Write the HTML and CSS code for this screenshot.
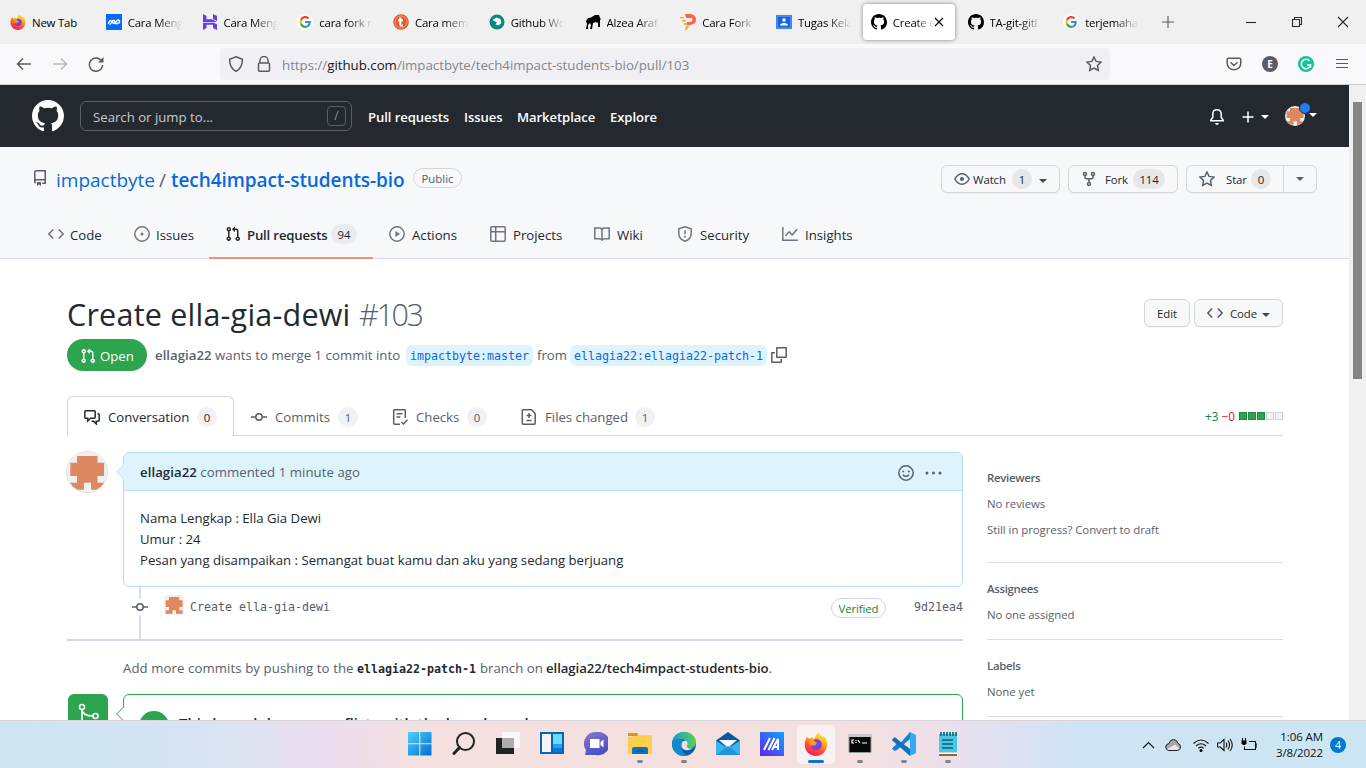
FILE: index.html
```html
<!DOCTYPE html>
<html lang="en">
<head>
<meta charset="utf-8">
<title>Create ella-gia-dewi by ellagia22 · Pull Request #103</title>
<link rel="stylesheet" href="styles.css">
</head>
<body>
<svg class="sprite" aria-hidden="true">
  <symbol id="mark" viewBox="0 0 16 16"><path fill="currentColor" d="M8 0C3.58 0 0 3.58 0 8c0 3.54 2.29 6.53 5.47 7.59.4.07.55-.17.55-.38 0-.19-.01-.82-.01-1.49-2.01.37-2.53-.49-2.69-.94-.09-.23-.48-.94-.82-1.13-.28-.15-.68-.52-.01-.53.63-.01 1.08.58 1.23.82.72 1.21 1.87.87 2.33.66.07-.52.28-.87.51-1.07-1.78-.2-3.64-.89-3.64-3.95 0-.87.31-1.59.82-2.15-.08-.2-.36-1.02.08-2.12 0 0 .67-.21 2.2.82.64-.18 1.32-.27 2-.27.68 0 1.36.09 2 .27 1.53-1.04 2.2-.82 2.2-.82.44 1.1.16 1.92.08 2.12.51.56.82 1.27.82 2.15 0 3.07-1.87 3.75-3.65 3.95.29.25.54.73.54 1.48 0 1.07-.01 1.93-.01 2.2 0 .21.15.46.55.38A8.013 8.013 0 0016 8c0-4.42-3.58-8-8-8z"/></symbol>
  <symbol id="repo" viewBox="0 0 16 16"><path fill="currentColor" fill-rule="evenodd" d="M2 2.5A2.5 2.5 0 014.5 0h8.75a.75.75 0 01.75.75v12.5a.75.75 0 01-.75.75h-2.5a.75.75 0 110-1.5h1.75v-2h-8a1 1 0 00-.714 1.7.75.75 0 01-1.072 1.05A2.495 2.495 0 012 11.5v-9zm10.5-1V9h-8c-.356 0-.694.074-1 .208V2.5a1 1 0 011-1h8zM5 12.25v3.25a.25.25 0 00.4.2l1.45-1.087a.25.25 0 01.3 0L8.6 15.7a.25.25 0 00.4-.2v-3.25a.25.25 0 00-.25-.25h-3.5a.25.25 0 00-.25.25z"/></symbol>
  <symbol id="pull" viewBox="0 0 16 16"><path fill="currentColor" fill-rule="evenodd" d="M7.177 3.073L9.573.677A.25.25 0 0110 .854v4.792a.25.25 0 01-.427.177L7.177 3.427a.25.25 0 010-.354zM3.75 2.5a.75.75 0 100 1.5.75.75 0 000-1.5zm-2.25.75a2.25 2.25 0 113 2.122v5.256a2.251 2.251 0 11-1.5 0V5.372A2.25 2.25 0 011.5 3.25zM11 2.5h-1V4h1a1 1 0 011 1v5.628a2.251 2.251 0 101.5 0V5A2.5 2.5 0 0011 2.5zm1 10.25a.75.75 0 111.5 0 .75.75 0 01-1.5 0zM3.75 12a.75.75 0 100 1.5.75.75 0 000-1.5z"/></symbol>
  <symbol id="code" viewBox="0 0 16 16"><path class="ln" d="M5.2 3.4L.9 8l4.3 4.6M10.8 3.4L15.1 8l-4.3 4.6"/></symbol>
  <symbol id="issue" viewBox="0 0 16 16"><circle class="ln" cx="8" cy="8" r="7.2"/><circle cx="8" cy="8" r="1.5" fill="currentColor"/></symbol>
  <symbol id="play" viewBox="0 0 16 16"><circle class="ln" cx="8" cy="8" r="7.2"/><path fill="currentColor" d="M6.4 5v6l4.7-3z"/></symbol>
  <symbol id="table" viewBox="0 0 16 16"><path class="ln" d="M1.7.8h12.6q.9 0 .9.9v12.6q0 .9-.9.9H1.7q-.9 0-.9-.9V1.7q0-.9.9-.9zM.8 5.7h14.4M5.7.8v14.4"/></symbol>
  <symbol id="book" viewBox="0 0 16 16"><path class="ln" d="M8 14.6q-.5-1.800-2.600-1.800H.8V1.900h4.600Q8 1.900 8 4.300v10.300q.5-1.800 2.600-1.800h4.600V1.900h-4.600Q8 1.900 8 4.300"/></symbol>
  <symbol id="shield" viewBox="0 0 16 16"><path class="ln" d="M8 .8l6.200 2v4.700c0 3.600-2.200 6.200-6.200 7.700-4-1.500-6.200-4.100-6.200-7.700V2.800zM8 4.300v4"/><circle cx="8" cy="10.800" r="1" fill="currentColor"/></symbol>
  <symbol id="graph" viewBox="0 0 16 16"><path class="ln" d="M.8 1v13.300h15M3.500 9.800l3.700-4 3 3 5-5.500"/></symbol>
  <symbol id="eye" viewBox="0 0 16 16"><path class="ln" d="M.8 8C2.500 5 5 2.800 8 2.800S13.500 5 15.200 8C13.500 11 11 13.200 8 13.200S2.500 11 .8 8z"/><circle cx="8" cy="8" r="2" fill="currentColor"/></symbol>
  <symbol id="fork" viewBox="0 0 16 16"><g class="ln"><circle cx="4" cy="3" r="1.500"/><circle cx="12" cy="3" r="1.500"/><circle cx="8" cy="13" r="1.500"/><path d="M4 4.700v1.600q0 1.500 1.500 1.500h5q1.500 0 1.500-1.500V4.700M8 7.800v3.700"/></g></symbol>
  <symbol id="star" viewBox="0 0 16 16"><path class="ln" d="M8 1l2.100 4.400 4.900.7-3.500 3.400.8 4.800L8 12l-4.300 2.300.8-4.800L1 6.100l4.900-.7z"/></symbol>
  <symbol id="talk" viewBox="0 0 16 16"><path class="ln" d="M1.700 1.800h8.600q.9 0 .9.900v5.600q0 .9-.9.900H6.500L3.700 12V9.200h-2q-.9 0-.9-.9V2.700q0-.9.900-.9zM13.500 4.800h.8q.9 0 .9.900v5.600q0 .9-.9.900h-2V15L9.500 12.200H7.500"/></symbol>
  <symbol id="commit" viewBox="0 0 16 16"><path class="ln" d="M0 8h4.700M11.300 8H16"/><circle class="ln" cx="8" cy="8" r="3.200"/></symbol>
  <symbol id="checks" viewBox="0 0 16 16"><path class="ln" d="M8 15.200H2.600q-.9 0-.9-.9V1.700q0-.9.900-.9h9.800q.9 0 .9.900V9M4.500 4.800h6M4.500 8h3.800M9.500 13l2 2 4-4.200"/></symbol>
  <symbol id="diff" viewBox="0 0 16 16"><path class="ln" d="M2.200.8h8.300l3.700 3.700v9.800q0 .9-.9.900H2.200q-.9 0-.9-.9V1.700q0-.9.900-.9zM8 4v5M5.500 6.500h5M5.500 11.500h5"/></symbol>
  <symbol id="copy" viewBox="0 0 16 16"><path class="ln" stroke-linejoin="round" d="M5.800.8h9.400v9.400H5.800zM4 5.800H.8v9.400h9.400V12"/></symbol>
  <symbol id="smile" viewBox="0 0 16 16"><circle class="ln" cx="8" cy="8" r="7.200"/><circle cx="5.200" cy="6.500" r="1" fill="currentColor"/><circle cx="10.800" cy="6.500" r="1" fill="currentColor"/><path class="ln" d="M5 9.700q1.200 1.600 3 1.600t3-1.600"/></symbol>
  <symbol id="dots" viewBox="0 0 18 16"><g fill="currentColor"><circle cx="2" cy="8" r="1.500"/><circle cx="8.500" cy="8" r="1.500"/><circle cx="15" cy="8" r="1.500"/></g></symbol>
  <symbol id="bell" viewBox="0 0 16 16"><path class="ln" d="M8 .8c-2.700 0-4.200 1.900-4.200 4.200v3.200L1.800 11.300v.5h12.400v-.5l-2-3.100V5C12.200 2.700 10.700.8 8 .8z"/><path fill="currentColor" d="M6 14h4q-.5 2-2 2t-2-2z"/></symbol>
  <symbol id="plus" viewBox="0 0 16 16"><path class="ln" d="M8 2.500v11M2.500 8h11"/></symbol>
  <symbol id="caret" viewBox="0 0 8 4"><path fill="currentColor" d="M0 0h8L4 4z"/></symbol>
  <symbol id="identicon" viewBox="0 0 40 40"><path fill="#f0f0f0" d="M0 0h40v40H0z"/><path fill="#dd8860" d="M10 4h20.500v6.700h6.600v13.300h-6.600v6.700h6.600v7H24v-7h-7v7H3.300v-7H10V24H3.300V10.700H10z"/></symbol>
  <symbol id="merge" viewBox="0 0 24 24"><g fill="none" stroke="#fff" stroke-width="1.600"><circle cx="5" cy="4" r="2.500"/><circle cx="5" cy="20" r="2.500"/><circle cx="18.500" cy="13" r="2.500"/><path d="M5 6.500v11M5 7q1 6 11 6"/></g></symbol>
  <symbol id="google" viewBox="0 0 16 16"><circle cx="8" cy="8" r="8" fill="#fff"/><g fill="none" stroke-width="2.200"><path stroke="#ea4335" d="M4 6a4.600 4.600 0 017.500-1.600"/><path stroke="#fbbc05" d="M4.100 10.300a4.700 4.700 0 010-4.600"/><path stroke="#34a853" d="M4 10a4.600 4.600 0 007.300 1.700"/><path stroke="#4285f4" d="M8 8h4.700q0 2.500-1.600 3.800"/></g></symbol>
  <linearGradient id="ffg" x1=".75" y1="0" x2=".3" y2="1"><stop offset="0" stop-color="#fff044"/><stop offset=".35" stop-color="#ffb11b"/><stop offset=".65" stop-color="#ff5433"/><stop offset="1" stop-color="#f5155f"/></linearGradient>
  <symbol id="firefox" viewBox="0 0 24 24"><path fill="url(#ffg)" d="M14.500 0c.8 2.800 3 4 4.500 5l.8-1.200C22 6.500 23.500 9 23 13.500 22.300 20 17.500 24 12 24 5.500 24 .7 19 .7 12.500.7 9 1.800 6.800 3.500 4.500L5 7l3-1.800L9.500 7c2-1.500 2.500-4.500 5-7z"/><path fill="#7542e5" d="M12.500 7.300c3.200 0 5.300 2.400 5.300 5.200A5.500 5.500 0 0112 18c-3 0-5.200-2.300-5.200-5l3 1.300 2.900-1.600-2.200-1-3.200.3c.5-2.700 2.400-4.700 5.200-4.700z"/><path fill="#ffa11b" d="M5.500 7.500q4-1 5.500 2.300l2 1.300q-.6 1.800-3.500 1.500-1.600.2-2.500 1.600-2.500-3-1.500-6.700z"/></symbol>
</svg>

<header class="browser">
  <div class="tabs">
    <div class="tab"><svg class="i16"><use href="#firefox"/></svg><span class="tab-name">New Tab</span></div>
    <div class="tab"><svg class="i16" viewBox="0 0 16 16"><path fill="#0869ff" d="M0 0h16v16H0z"/><path fill="none" stroke="#fff" stroke-width="1.500" d="M2.500 10c0-2.500 1.500-4 3-3s1.500 3 3 2.500S10.500 6 12 6s2 1.500 1 3M3.500 10.500c2 0 2-4 4-4s1.500 3.200 3.200 3.200 1.300-1 2.300-1"/></svg><span class="tab-name fade">Cara Meng</span></div>
    <div class="tab"><svg class="i16" viewBox="0 0 16 16"><path fill="#673de6" d="M1 0l3.500 2v3.300H10L15 8H1zM11 0l4 2v5l-4-2zM1 8.800h11L15 10.500V16l-4-2v-3.300H4.500V14L1 16z"/></svg><span class="tab-name fade">Cara Meng</span></div>
    <div class="tab"><svg class="i16"><use href="#google"/></svg><span class="tab-name fade">cara fork r</span></div>
    <div class="tab"><svg class="i16" viewBox="0 0 16 16"><circle cx="8" cy="8" r="7.800" fill="#e55b2d"/><circle cx="8" cy="8" r="6" fill="none" stroke="#f49a76"/><path fill="none" stroke="#fff" stroke-width="2" d="M7.300 3.500v7q0 1.500 2.700 1M5 6.300h5"/></svg><span class="tab-name fade">Cara mem</span></div>
    <div class="tab"><svg class="i16" viewBox="0 0 16 16"><circle cx="8" cy="8" r="7.500" fill="#07877d"/><path fill="#fff" d="M3.500 6l4-2.500 4 1.500 1 4-3 2.500-3-1 1.500-2z"/></svg><span class="tab-name fade">Github Wo</span></div>
    <div class="tab"><svg class="i16" viewBox="0 0 16 16"><path d="M1 7l2-3 3-.5L10 1h4l1 3 1 1-1 1v7h-2V9l-2-1-3 1-1 6H5l1-4-1-2-2 2v4H1l1-5z"/></svg><span class="tab-name fade">Alzea Araf</span></div>
    <div class="tab"><svg class="i16" viewBox="0 0 16 16"><path fill="#ffa552" d="M0 3h4v1.500H0zM2 6h4v1.500H2zM4 9h5v2H4zM6 12h3l-2 4H5z"/><path fill="#ff6242" d="M5 0h6q5 1 5 5.500T10 11H7V8h3q2.500 0 2.500-2.500T10 4H6z"/></svg><span class="tab-name fade">Cara Fork</span></div>
    <div class="tab"><svg class="i16" viewBox="0 0 16 16"><path fill="#4285f4" d="M0 1h16v14H0z"/><path fill="#1967d2" d="M2 3h12v10H2z"/><circle cx="8" cy="6" r="1.800" fill="#fff"/><path fill="#fff" d="M4 11.500q0-2.500 4-2.500t4 2.500z"/></svg><span class="tab-name fade">Tugas Kela</span></div>
    <div class="tab active"><svg class="i16"><use href="#mark"/></svg><span class="tab-name fade short">Create e</span><svg class="close" viewBox="0 0 10 10"><path class="thin" d="M1 1l8 8M9 1L1 9"/></svg></div>
    <div class="tab"><svg class="i16"><use href="#mark"/></svg><span class="tab-name fade">TA-git-gitl</span></div>
    <div class="tab"><svg class="i16"><use href="#google"/></svg><span class="tab-name fade">terjemaha</span></div>
    <svg class="newtab" viewBox="0 0 12 12"><path class="thin" d="M6 0v12M0 6h12"/></svg>
    <div class="winctl">
      <svg viewBox="0 0 12 12"><path class="thin" d="M1 6.500h10"/></svg>
      <svg viewBox="0 0 12 12"><path class="thin" d="M1.500 3.500h7v7h-7zM3.500 3.500v-2h7v7h-2"/></svg>
      <svg viewBox="0 0 12 12"><path class="thin" d="M1 1l10 10M11 1L1 11"/></svg>
    </div>
  </div>
  <div class="toolbar">
    <div class="navbtns">
      <svg class="i16" viewBox="0 0 16 16"><path class="ln" d="M15 8H1.500M7 2.500L1.500 8 7 13.500"/></svg>
      <svg class="i16 dim" viewBox="0 0 16 16"><path class="ln" d="M1 8h13.500M9 2.500L14.500 8 9 13.500"/></svg>
      <svg class="i16" viewBox="0 0 16 16"><path class="ln" d="M13.800 5.500A6.600 6.600 0 1014.600 9"/><path fill="currentColor" d="M15.500 1v5.500H10z"/></svg>
    </div>
    <div class="urlbar">
      <svg class="i16" viewBox="0 0 16 16"><path class="ln" d="M8 .8l6.400 2.400c0 6-2 10-6.400 12-4.400-2-6.400-6-6.400-12z"/></svg>
      <svg class="i16" viewBox="0 0 16 16"><path class="ln" d="M4 7V4.500a4 4 0 018 0V7M3.500 7h9q1 0 1 1v6.200q0 1-1 1h-9q-1 0-1-1V8q0-1 1-1z"/></svg>
      <span class="url">https://<b>github.com</b>/impactbyte/tech4impact-students-bio/pull/103</span>
      <svg class="i16 fav"><use href="#star"/></svg>
    </div>
    <div class="ext">
      <svg class="i16" viewBox="0 0 16 16"><path class="ln" d="M2.500 2.300h11q1.300 0 1.300 1.300V7q0 6-6.800 6.800Q1.200 13 1.200 7V3.600q0-1.300 1.300-1.300zM4.500 6.200L8 9.500l3.500-3.300"/></svg>
      <span class="profile">E</span>
      <svg class="i16" viewBox="0 0 16 16"><circle cx="8" cy="8" r="8" fill="#15c39a"/><path fill="none" stroke="#fff" stroke-width="1.500" d="M11.500 4.800A4.700 4.700 0 1012.600 9H9M12.600 8.500v3"/></svg>
      <svg class="i16 menu" viewBox="0 0 16 16"><path class="thin" d="M2 3.500h12M2 7.500h12M2 11.500h12"/></svg>
    </div>
  </div>
</header>

<div class="viewport">
  <div class="page">
    <div class="gh-header">
      <svg class="logo"><use href="#mark"/></svg>
      <div class="search"><span>Search or jump to...</span><kbd>/</kbd></div>
      <nav class="gh-nav"><a>Pull requests</a><a>Issues</a><a>Marketplace</a><a>Explore</a></nav>
      <div class="gh-user">
        <svg class="i16"><use href="#bell"/></svg>
        <svg class="i16 add"><use href="#plus"/></svg><svg class="caret"><use href="#caret"/></svg>
        <div class="me"><svg class="me-img"><use href="#identicon"/></svg><i class="notice"></i></div><svg class="caret"><use href="#caret"/></svg>
      </div>
    </div>

    <div class="repo-head">
      <div class="repo-row">
        <svg class="i16 muted repo-ico"><use href="#repo"/></svg>
        <div class="repo-name"><a class="owner">impactbyte</a><span class="slash">/</span><a class="name">tech4impact-students-bio</a></div>
        <span class="pill">Public</span>
        <div class="repo-actions">
          <div class="btn watch"><svg class="i16"><use href="#eye"/></svg><span>Watch</span><em>1</em><svg class="caret"><use href="#caret"/></svg></div>
          <div class="btn forkb"><svg class="i16"><use href="#fork"/></svg><span>Fork</span><em>114</em></div>
          <div class="btn starb"><div class="star-main"><svg class="i16"><use href="#star"/></svg><span>Star</span><em>0</em></div><div class="star-more"><svg class="caret"><use href="#caret"/></svg></div></div>
        </div>
      </div>
      <nav class="repo-nav">
        <a><svg class="i16"><use href="#code"/></svg><span>Code</span></a>
        <a><svg class="i16"><use href="#issue"/></svg><span>Issues</span></a>
        <a class="on"><svg class="i16"><use href="#pull"/></svg><span>Pull requests</span><em>94</em></a>
        <a><svg class="i16"><use href="#play"/></svg><span class="wide">Actions</span></a>
        <a><svg class="i16"><use href="#table"/></svg><span class="wide">Projects</span></a>
        <a><svg class="i16"><use href="#book"/></svg><span class="wide">Wiki</span></a>
        <a><svg class="i16"><use href="#shield"/></svg><span class="wide">Security</span></a>
        <a><svg class="i16"><use href="#graph"/></svg><span class="wide">Insights</span></a>
      </nav>
    </div>

    <main class="pr">
      <div class="title-row">
        <h1><span class="t">Create ella-gia-dewi</span><span class="num">#103</span></h1>
        <div class="btn edit">Edit</div>
        <div class="btn codeb"><svg class="i16"><use href="#code"/></svg><span>Code</span><svg class="caret"><use href="#caret"/></svg></div>
      </div>
      <div class="state-row">
        <span class="state"><svg class="i16"><use href="#pull"/></svg><span>Open</span></span>
        <span class="merge-a"><b>ellagia22</b> wants to merge 1 commit into</span>
        <code class="ref r1">impactbyte:master</code>
        <span class="from">from</span>
        <code class="ref r2">ellagia22:ellagia22-patch-1</code>
        <svg class="i16"><use href="#copy"/></svg>
      </div>
      <div class="pr-tabs">
        <a class="on"><svg class="i16"><use href="#talk"/></svg><span>Conversation</span><em>0</em></a>
        <a><svg class="i16"><use href="#commit"/></svg><span>Commits</span><em>1</em></a>
        <a><svg class="i16"><use href="#checks"/></svg><span>Checks</span><em>0</em></a>
        <a><svg class="i16"><use href="#diff"/></svg><span>Files changed</span><em>1</em></a>
        <div class="stat"><span class="plus">+3</span><span class="minus">−0</span><i class="g"></i><i class="g"></i><i class="g"></i><i></i><i></i></div>
      </div>

      <div class="cols">
        <section class="thread">
          <div class="comment-row">
            <svg class="avatar"><use href="#identicon"/></svg>
            <article class="comment">
              <svg class="notch" viewBox="0 0 8 16"><path fill="#ddf4ff" stroke="#b6dcfb" d="M8 .7L.7 8 8 15.300"/></svg>
              <header><span class="by"><b>ellagia22</b> commented 1 minute ago</span><svg class="i16"><use href="#smile"/></svg><svg class="more"><use href="#dots"/></svg></header>
              <div class="text"><p>Nama Lengkap : Ella Gia Dewi</p><p>Umur : 24</p><p>Pesan yang disampaikan : Semangat buat kamu dan aku yang sedang berjuang</p></div>
            </article>
          </div>
          <div class="commit-row">
            <div class="rail"><svg class="i16"><use href="#commit"/></svg></div>
            <svg class="tiny"><use href="#identicon"/></svg>
            <code class="msg">Create ella-gia-dewi</code>
            <span class="verified">Verified</span>
            <code>9d21ea4</code>
          </div>
          <p class="hint"><span class="h1">Add more commits by pushing to the</span><code>ellagia22-patch-1</code><span class="h2">branch on</span><b>ellagia22/tech4impact-students-bio</b>.</p>
          <div class="merge-row">
            <div class="merge-ico"><svg><use href="#merge"/></svg></div>
            <div class="merge-box">
              <svg class="notch" viewBox="0 0 8 16"><path fill="#fff" stroke="#2da44e" d="M8 .7L.7 8 8 15.300"/></svg>
              <i class="ok"></i><b>This branch has no conflicts with the base branch</b>
            </div>
          </div>
        </section>
        <aside class="side">
          <div class="blk b1"><h2>Reviewers</h2><p>No reviews</p><p>Still in progress? Convert to draft</p></div>
          <div class="blk"><h2>Assignees</h2><p>No one assigned</p></div>
          <div class="blk"><h2>Labels</h2><p>None yet</p></div>
        </aside>
      </div>
    </main>
  </div>
  <div class="scroll"><div class="thumb"></div></div>
</div>

<footer class="taskbar">
  <div class="apps">
    <div class="app"><svg viewBox="0 0 24 24"><defs><linearGradient id="wg" x2="1" y2="1"><stop offset="0" stop-color="#50d0f8"/><stop offset="1" stop-color="#0070d0"/></linearGradient></defs><path fill="url(#wg)" d="M0 0h11.300v11.300H0zM12.300 0H23.500v11.300H12.300zM0 12.300h11.300V23.500H0zM12.300 12.300H23.500V23.500H12.300z"/></svg></div>
    <div class="app"><svg viewBox="0 0 24 24" fill="none" stroke="#222"><circle cx="13.500" cy="9.500" r="8.500" stroke-width="2"/><path stroke-width="3" stroke-linecap="round" d="M7.500 15.500l-5.500 6"/></svg></div>
    <div class="app"><svg viewBox="0 0 24 24"><path fill="#222" d="M0 6h18v16H0z"/><path fill="#fff" opacity=".75" d="M6 0h18v16H6z"/><path fill="#999" opacity=".6" d="M6 6h12v10H6z"/></svg></div>
    <div class="app"><svg viewBox="0 0 24 24"><path fill="#0864b5" d="M0 0h24v22H0z"/><path fill="#f5f5f5" d="M2 2h9v18H2z"/><path fill="#6bdcff" d="M13 2h9v10h-9z"/><path fill="#1ea4f5" d="M13 12h9v8h-9z"/><path fill="#0878e0" d="M13 16h9v4h-9z"/></svg></div>
    <div class="app"><svg viewBox="0 0 24 24"><defs><linearGradient id="cg" x2=".5" y2="1"><stop offset="0" stop-color="#887ac8"/><stop offset="1" stop-color="#4c50c0"/></linearGradient></defs><path fill="url(#cg)" d="M12 0a11.700 11.700 0 110 23H1l1-5A11.500 11.500 0 0112 0z"/><path fill="#fff" d="M6 7h9.500v9H6zM16.500 10l3-2.500v8l-3-2.500z"/></svg></div>
    <div class="app run"><svg viewBox="0 0 24 24"><path fill="#d99a07" d="M0 1h9l2 3H0z"/><path fill="#ffd04c" d="M0 5l9-1 1-1h14v19H0z"/><path fill="#1070bd" d="M4 22v-5q0-2 2-2h12q2 0 2 2v5z"/><path stroke="#064b8c" d="M8 19h8"/></svg></div>
    <div class="app run"><svg viewBox="0 0 24 24"><defs><linearGradient id="eg"><stop offset="0" stop-color="#169bdb"/><stop offset="1" stop-color="#5bd34b"/></linearGradient></defs><circle cx="12" cy="12" r="12" fill="#0e5bab"/><path fill="url(#eg)" d="M0 12C0 5 5 0 12 0s12 5 12 10c0 4-3 6.500-6.500 6.500-3 0-4-1.500-3-3C16 10.500 13 7 8.500 7 4 7 1 9 0 12z"/><path fill="#1686cf" d="M0 12c1-4 5-6 8-5 5 1 3 4 2 7-1 5 2 8 6 9C7 26 0 19 0 12z"/><path fill="#f1e1e2" d="M9.500 13q.5-5 4.500-4 3 1.500.5 5 1 3 6 2.500Q17 19 13 18q-3.500-1-3.500-5z"/></svg></div>
    <div class="app"><svg viewBox="0 0 24 24"><path fill="#0a58a5" d="M0 8.500L12 0l12 8.500V15H0z"/><path fill="#f5fbff" d="M3 8h18L12 16z"/><path fill="#38b5ee" d="M0 8.500l12 8 12-8V23H0z"/><path fill="#2094df" d="M0 23l12-9 12 9z"/></svg></div>
    <div class="app"><svg viewBox="0 0 24 24"><defs><linearGradient id="ag" y1="1" x2="1" y2="0"><stop offset="0" stop-color="#6520ed"/><stop offset="1" stop-color="#0aa7ff"/></linearGradient></defs><path fill="url(#ag)" d="M0 0h24v24H0z"/><path fill="none" stroke="#fff" stroke-width="2" d="M4 18l6-12M8.500 18l6-12M12 18l6-11v11M14 15h4"/></svg></div>
    <div class="app current"><svg><use href="#firefox"/></svg></div>
    <div class="app run"><svg viewBox="0 0 24 24"><path fill="#080808" stroke="#999" d="M1 2.500h22v18H1z"/><path fill="#c8c8c8" d="M1 2h22v3H1z"/><path fill="none" stroke="#fff" stroke-width="1.200" d="M6 8H4v3h2M8 8v1M8 10v1M10 8l2 3M14 11h5"/></svg></div>
    <div class="app run"><svg viewBox="0 0 24 24"><path fill="#1681ca" d="M0 8l2.500-2 6 5L18 0v7L5 18l-2.500 1L0 16.500 4.500 12z"/><path fill="#1070b5" d="M2.500 5L18 17v7L0 8z"/><path fill="#30aaf2" d="M18 0l6 3v18l-6 3z"/></svg></div>
    <div class="app run"><svg viewBox="0 0 24 24"><path fill="#4dc7e4" d="M3 2h18v20H3z"/><path fill="#ac5d1c" d="M3 22h18v2H3z"/><path fill="#fff" d="M3 20.500h18v1.500H3z"/><path fill="none" stroke="#096078" stroke-width="1.600" d="M5 0v4M8 0v4M11 0v4M14 0v4M17 0v4M20 0v4M6 8h11M6 12h11M6 16h11"/></svg></div>
  </div>
  <div class="tray">
    <svg class="i16" viewBox="0 0 16 16"><path class="thin" d="M3 11l5.500-5.500L14 11"/></svg>
    <svg class="i16 cloud" viewBox="0 0 16 16"><path fill="#a8a8a8" stroke="#222" d="M4 13.500Q.7 13 .7 10T4 6.500Q5 2.500 8.500 2.500T13 6.500q2.500.7 2.500 3.500T12.500 13.500z"/><path fill="#e7e7e7" d="M2 12l8-4.500 4.500 4L12 13H4z"/></svg>
    <svg class="i16 wifi" viewBox="0 0 16 16"><path class="thin" d="M.5 6.500Q8-.5 15.500 6.500M3 9q5-4.500 10 0M5.300 11.300q2.700-2.300 5.400 0"/><circle cx="8" cy="13.500" r="1.500"/></svg>
    <svg class="i16 sound" viewBox="0 0 16 16"><path class="thin" d="M.5 6h2.700L7 2.500v11L3.200 10H.5zM9 5.500q1.500 2.500 0 5M11 3.500q3 4.500 0 9M13 2q4.500 6 0 12"/></svg>
    <svg class="i16 batt" viewBox="0 0 16 16"><path class="thin" d="M8 4.500h6.500v8h-11V9.500M14.500 7H16v3h-1.500M1.500 1v3M4.500 1v3"/><path d="M.5 3.500h5v3L4 8H2L.5 6.500z"/></svg>
    <div class="clock"><span>1:06 AM</span><span>3/8/2022</span></div>
    <span class="badge">4</span>
  </div>
</footer>
</body>
</html>
```

FILE: styles.css
```css
* { box-sizing: border-box; }
body {
  margin: 0; width: 1366px; height: 768px; overflow: hidden;
  display: flex; flex-direction: column;
  font-family: "Open Sans", "Noto Sans", sans-serif; font-size: 13.2px;
  color: #24292f; background: #fff; white-space: nowrap;
}
.sprite { position: absolute; width: 0; height: 0; }
svg { display: block; flex: none; }
.ln { fill: none; stroke: currentColor; stroke-width: 1.5; }
.thin { fill: none; stroke: currentColor; stroke-width: 1.1; }
.i16 { width: 16px; height: 16px; }
.caret { width: 8px; height: 4px; }
em { font-style: normal; }
h1, h2, p { margin: 0; font-weight: 400; }
code { font-family: "DejaVu Sans Mono", monospace; font-size: 11.63px; }

/* browser chrome */
.browser { height: 85px; flex: none; border-bottom: 1px solid #ccccce; background: #f9f9fb; }
.tabs { height: 44px; background: #f0f0f0; display: flex; align-items: center; }
.tab { width: 95.75px; height: 36px; flex: none; padding-left: 10px; display: flex; align-items: center; font-size: 11.4px; letter-spacing: -.2px; color: #000; }
.tab-name { width: 54px; margin-left: 6px; overflow: hidden; padding-top: 1px; }
.fade { -webkit-mask-image: linear-gradient(90deg, #000 55%, transparent 100%); mask-image: linear-gradient(90deg, #000 55%, transparent 100%); }
.short { width: 42px; }
.active { width: 92px; margin: 0 2.75px 0 1px; padding-left: 8px; background: #fff; border-radius: 4px; box-shadow: 0 0 4px rgba(0,0,0,.45); }
.close { width: 10px; height: 10px; margin-left: -1px; }
.newtab { width: 12px; height: 12px; margin-left: 13px; color: #5b5b66; }
.winctl { margin-left: auto; margin-right: 17px; display: flex; gap: 34px; }
.winctl svg { width: 12px; height: 12px; }
.toolbar { height: 40px; display: flex; align-items: center; color: #5b5b66; }
.navbtns { width: 220px; padding-left: 16px; display: flex; gap: 20px; }
.dim { opacity: .4; }
.urlbar { width: 890px; height: 32px; border-radius: 4px; background: #f0f0f4; display: flex; align-items: center; padding: 0 8px; gap: 12px; }
.url { font-size: 13.25px; color: #85858b; margin-left: -2px; padding-top: 2px; }
.url b { font-weight: 400; color: #15141a; }
.fav { margin-left: auto; }
.ext { display: flex; gap: 20px; margin-left: 116px; }
.profile { width: 16px; height: 16px; border-radius: 50%; background: #5b5b66; color: #fff; font-size: 10px; font-weight: 700; line-height: 16px; text-align: center; }

/* page and scrollbar */
.viewport { height: 635px; flex: none; display: flex; }
.page { width: 1349px; height: 635px; overflow: hidden; }
.scroll { width: 17px; background: #f0f0f0; padding: 17px 4px; }
.thumb { width: 9px; height: 277px; background: #858585; }

.gh-header { height: 62px; background: #24292f; color: #fff; display: flex; align-items: center; padding: 0 32px; }
.logo { width: 32px; height: 32px; }
.search { width: 272px; height: 30px; margin: 0 16px; border: 1px solid #57606a; border-radius: 6px; display: flex; align-items: center; justify-content: space-between; padding: 2px 5px 0 12px; color: #c6cacf; }
.search kbd { width: 19px; height: 20px; margin-top: -2px; border: 1px solid #57606a; border-radius: 4px; text-align: center; font: 12px/18px "Open Sans", sans-serif; color: #8b949e; }
.gh-nav { display: grid; grid-template-columns: 96px 53px 93px 60px; font-size: 13.1px; letter-spacing: -.08px; font-weight: 600; padding-top: 2px; }
.gh-user { margin-left: auto; display: flex; align-items: center; padding-top: 2px; }
.add { margin-left: 15px; }
.gh-user .caret { margin-left: 5px; }
.me { position: relative; width: 20px; height: 20px; margin: -2px 0 0 16px; }
.me-img { width: 20px; height: 20px; border-radius: 50%; }
.me + .caret { margin: -4px 0 0 4px; }
.notice { position: absolute; left: 14px; top: -4px; width: 12px; height: 12px; border-radius: 50%; background: #1f7cf2; border: 1px solid #24292f; }

.repo-head { height: 112px; background: #f6f8fa; border-bottom: 1px solid #d5dbe1; }
.muted { color: #57606a; }
.repo-row { height: 64px; display: flex; padding: 18px 32px 0; }
.repo-ico { margin-top: 5px; }
.repo-name { width: 357px; margin-left: 8px; display: grid; grid-template-columns: 103px 12px auto; font-size: 19px; line-height: 30px; color: #0969da; }
.slash { color: #57606a; }
.name { font-weight: 600; letter-spacing: -.08px; }
.pill { width: 49px; height: 20px; margin-top: 3px; border: 1px solid #d0d7de; border-radius: 10px; font-size: 11.4px; line-height: 19px; text-align: center; color: #57606a; font-weight: 500; }
.repo-actions { margin-left: auto; display: flex; gap: 8px; }
.btn { height: 28px; display: flex; align-items: center; border: 1px solid #d5d8db; border-radius: 6px; background: #f6f8fa; font-size: 11.4px; letter-spacing: -.1px; font-weight: 500; box-shadow: 0 1px 0 rgba(27,31,36,.04); }
.btn svg { color: #57606a; }
.btn em { height: 20px; min-width: 20px; padding: 0 6px; border-radius: 10px; background: #e5e7e9; line-height: 21px; text-align: center; }
.watch { width: 119px; padding-left: 12px; }
.watch span { width: 36px; margin: 0 3px 0 3px; }
.watch .caret { margin: 4px 0 0 7px; color: #424a53; }
.forkb { width: 110px; padding-left: 12px; }
.forkb span { width: 24px; margin: 0 4px 0 8px; }
.forkb em { width: 32px; }
.starb { width: 131px; }
.star-main { width: 97px; height: 26px; display: flex; align-items: center; border-right: 1px solid #d5d8db; padding-left: 12px; }
.star-main span { width: 22px; margin: 0 3px 0 11px; }
.star-more { flex: 1; display: flex; justify-content: center; }

.repo-nav { height: 48px; display: grid; grid-template-columns: 86px 91px 164px 101px 104px 83px 105px 104px; padding-left: 32px; }
.repo-nav a { display: flex; align-items: center; padding: 0 16px 2px; }
.repo-nav svg { color: #6e7781; }
.repo-nav span { margin: 2px 0 0 6px; }
.repo-nav .wide { margin-left: 7px; }
.repo-nav .on { border-bottom: 2px solid #fd8c73; padding-bottom: 0; font-weight: 600; }
.repo-nav .on svg { color: #24292f; }
.repo-nav .on span { width: 80px; letter-spacing: -.18px; }
.repo-nav em { width: 26px; height: 20px; margin-left: 4px; border-radius: 10px; background: #e8ebef; font-size: 11.4px; line-height: 21px; font-weight: 500; text-align: center; }

/* pull request */
.pr { width: 1216px; margin-left: 67px; }
.title-row { height: 74px; padding-top: 34px; display: flex; }
.title-row h1 { flex: 1; font-size: 30.5px; line-height: 42px; display: flex; }
.t { width: 292px; letter-spacing: .22px; }
.num { color: #57606a; font-weight: 300; letter-spacing: -2.3px; }
.title-row .btn { margin-top: 6px; }
.edit { width: 46px; justify-content: center; margin-right: 4px; }
.codeb { width: 89px; padding-left: 12px; }
.codeb span { width: 28px; margin: 0 4px 0 7px; }
.codeb .caret { margin-top: 3px; color: #424a53; }
.state-row { height: 44px; display: flex; align-items: center; color: #57606a; }
.state { width: 80px; height: 32px; border-radius: 16px; background: #2da44e; color: #fff; display: flex; align-items: center; padding-left: 13px; gap: 4px; margin-right: 8px; }
.state svg, .state span { margin-top: 2px; }
.merge-a { width: 247px; margin-right: 4px; letter-spacing: .03px; }
.merge-a b { font-weight: 600; }
.ref { height: 21px; border-radius: 6px; background: #ddf4ff; color: #0969da; line-height: 22px; padding-left: 4px; }
.r1 { width: 127px; }
.from { width: 29px; margin: 0 4px; }
.r2 { width: 197px; margin-right: 4px; }
.pr-tabs { height: 40px; margin-top: 19px; border-bottom: 1px solid #d0d7de; display: grid; grid-template-columns: 167px 141px 131px 160px 1fr; color: #57606a; }
.pr-tabs a { height: 40px; display: flex; align-items: center; padding-left: 17px; padding-top: 2px; }
.pr-tabs span { margin-left: 8px; }
.pr-tabs a span { flex: 1; }
.pr-tabs em { width: 20px; height: 20px; border-radius: 10px; background: #eff1f3; font-size: 11.4px; line-height: 21px; text-align: center; margin-right: 17px; }
.pr-tabs .on { color: #24292f; background: #fff; border: 1px solid #d0d7de; border-bottom: 0; border-radius: 6px 6px 0 0; padding-left: 16px; padding-top: 1px; }
.pr-tabs .on em { margin-right: 16px; }
.pr-tabs a:nth-child(3) em { margin-right: 19px; }
.pr-tabs a:nth-child(4) em { margin-right: 11px; }
.pr-tabs a:nth-child(4) { padding-left: 15px; }
.stat { display: flex; align-items: center; justify-content: flex-end; font-size: 11.8px; }
.stat span { margin: 0 3px 0 0; }
.stat .plus { color: #1a7f37; }
.stat .minus { color: #cf222e; }
.stat i { width: 8px; height: 8px; margin-left: 1px; background: #eff1f3; border: 1px solid #d3d6d9; }
.stat .g { background: #2da44e; border-color: #238b40; }

.cols { display: flex; gap: 24px; padding-top: 16px; }
.thread { width: 896px; }
.comment-row, .merge-row { display: flex; gap: 16px; }
.avatar { width: 40px; height: 40px; border-radius: 50%; box-shadow: 0 0 0 1px #dedfe0; }
.comment { position: relative; width: 840px; height: 135px; border: 1px solid #b6dcfb; border-radius: 6px; background: #fff; }
.notch { position: absolute; left: -8px; top: 11px; width: 8px; height: 16px; }
.comment header { height: 38px; display: flex; align-items: center; background: #ddf4ff; border-bottom: 1px solid #b6dcfb; border-radius: 5px 5px 0 0; padding: 1px 19px 0 16px; color: #57606a; }
.comment header svg { margin-top: 1px; }
.comment b, .hint b { color: #24292f; font-weight: 600; }
.by { flex: 1; letter-spacing: .06px; margin-top: -1px; }
.more { width: 18px; height: 16px; margin-left: 11px; }
.text { padding: 17px 16px; line-height: 21px; letter-spacing: -.01px; }
.commit-row { height: 54px; display: flex; align-items: flex-start; border-bottom: 2px solid #d0d7de; color: #57606a; }
.rail { width: 16px; height: 52px; margin: 0 16px 0 65px; padding-top: 12px; background: linear-gradient(#d8dee4, #d8dee4) 7px 0 / 2px 100% no-repeat; }
.rail svg { height: 16px; background: #fff; }
.tiny { width: 20px; height: 20px; margin-top: 8px; border-radius: 4px; }
.commit-row code { margin-top: 13px; }
.commit-row .msg { flex: 1; margin-left: 6px; }
.verified { width: 55px; height: 20px; margin: 11px 28px 0 0; border: 1px solid #d0d7de; border-radius: 10px; color: #1a7f37; font-size: 11.4px; letter-spacing: -.1px; line-height: 19px; text-align: center; }
.hint { height: 53px; padding: 17px 0 0 56px; line-height: 20px; color: #57606a; display: flex; }
.hint .h1 { width: 234px; letter-spacing: .09px; }
.hint code { width: 123px; font-size: 11.63px; font-weight: 700; color: #24292f; line-height: 22px; }
.hint .h2 { width: 66px; }
.hint b { letter-spacing: -.07px; }
.merge-ico { width: 40px; height: 40px; border-radius: 6px; background: #2da44e; padding: 9px; margin-left: 1px; margin-right: -1px; }
.merge-ico svg { width: 24px; height: 24px; }
.merge-box { position: relative; width: 840px; height: 80px; border: 1px solid #2da44e; border-radius: 6px; padding: 16px 15px; display: flex; font-size: 14.9px; }
.merge-box b { font-weight: 600; line-height: 24px; }
.ok { width: 30px; height: 30px; border-radius: 50%; background: #2da44e; margin-right: 10px; }
.side { width: 296px; font-size: 11.4px; letter-spacing: -.05px; color: #57606a; }
.blk { height: 77px; border-bottom: 1px solid #d8dee4; padding-top: 16px; line-height: 20px; }
.b1 { height: 111px; }
.side h2 { font-size: inherit; font-weight: 600; margin-bottom: 6px; letter-spacing: -.3px; }
.side p { margin-bottom: 6px; }

/* taskbar */
.taskbar { height: 48px; flex: none; display: flex; border-top: 1px solid #d9d2d8; padding-left: 398px; background: linear-gradient(90deg, #cde5f1 0, #d6e3f3 190px, #dbe5f3 230px, #ecdcef 325px, #f4e1df 420px, #f4e1df 850px, #efdfe8 930px, #dfe1f2 1000px, #cfe3f4 1080px, #cbe6f2 1366px); }
.apps { display: flex; height: 47px; }
.app { width: 44px; display: flex; flex-direction: column; align-items: center; padding-top: 11px; gap: 4px; }
.app svg { width: 24px; height: 24px; }
.run::after { content: ""; width: 6px; height: 3px; border-radius: 2px; background: #898284; }
.current { width: 38px; height: 39px; margin: 4px 3px 0; padding-top: 7px; background: #faf2f2; border-radius: 4px; }
.current::after { content: ""; width: 16px; height: 3px; border-radius: 2px; background: #0078d4; }
.tray { margin-left: auto; width: 226px; display: flex; align-items: center; color: #111; }
.cloud { margin-left: 9px; }
.wifi { margin-left: 12px; }
.sound { margin-left: 8px; }
.batt { margin-left: 8px; }
.clock { width: 66px; display: flex; flex-direction: column; align-items: flex-end; font-size: 11.5px; letter-spacing: -.1px; line-height: 16px; }
.badge { width: 16px; height: 16px; margin-left: 7px; border-radius: 50%; background: #0078d4; color: #fff; font-size: 10.5px; line-height: 16px; text-align: center; }
```
